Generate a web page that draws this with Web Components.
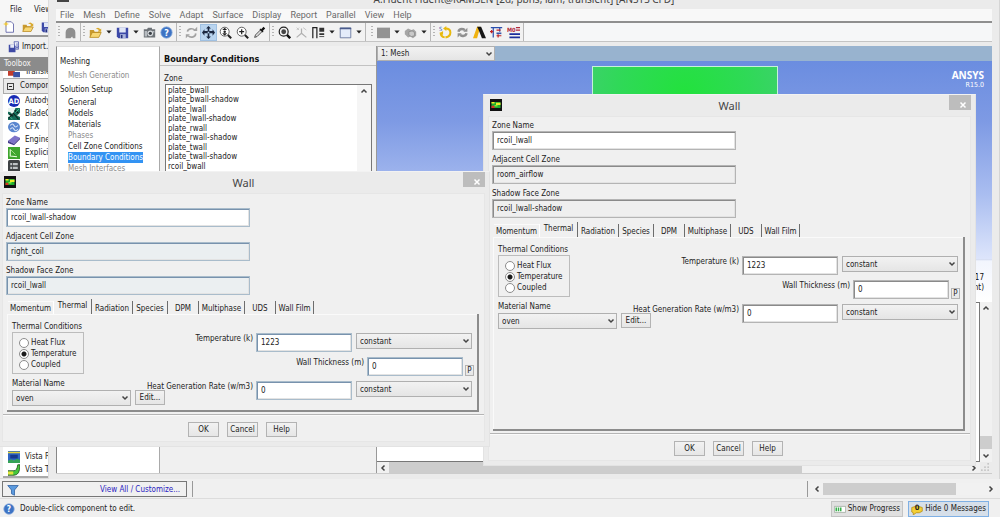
<!DOCTYPE html>
<html lang="en">
<head>
<meta charset="utf-8">
<title>Fluent boundary conditions</title>
<style>
html, body { margin: 0; height: 100%; overflow: hidden; background: #efefef; }
body { font: 8px/10px "DejaVu Sans Condensed", "DejaVu Sans", sans-serif; color: #222; }
</style>
</head>
<body>
<app-desktop></app-desktop>
<script>
const base = `<style>
*{box-sizing:border-box}
button,input,select{font:inherit;color:inherit;margin:0;border-radius:0;outline:0}
button{padding:0;cursor:pointer}
svg{display:block;flex:none}
ul{list-style:none;margin:0;padding:0}
</style>`;
const define = (name, html, setup) => {
  const t = document.createElement('template');
  t.innerHTML = base + html;
  customElements.define(name, class extends HTMLElement {
    constructor() {
      super();
      this.attachShadow({ mode: 'open' }).append(t.content.cloneNode(true));
    }
    connectedCallback() { if (setup) setup(this, this.shadowRoot); }
  });
};

/* ---------- icons, all on a 16 unit grid ---------- */
const arrowsPath = 'M8 0l3 3H9v3h4V4l3 4-3 4V9H9v4h2l-3 3-3-3h2V9H3v3L0 8l3-4v2h4V3H5z';
const icons = {
  blob: '<path d="M2 15V8a6 6 0 0 1 12 0v7h-3l-1-2-2 2z" fill="#8f8f8f"/>',
  open: '<path d="M1 14V5h5l1 2h6v2H5z" fill="#c99a2e"/><path d="M1 14l3-6h11l-3 6z" fill="#f7d774" stroke="#b98a20"/><path d="M8 4q3-4 6 0l1-1v4h-4l1-2q-2-2-4-1z" fill="#d9a92c"/>',
  save: '<path d="M1 2h14v13H3l-2-2z" fill="#3c49a8"/><path d="M4 2h8v6H4z" fill="#dfe5f6"/><path d="M5 10h7v5H5z" fill="#a9b3dc"/><path d="M6 11h2v4H6z" fill="#25307c"/>',
  camera: '<path d="M1 4h4l1-2h5v2h4v10H1z" fill="#6d7277"/><path d="M2 6h3v7H2zM12 6h2v2h-2z" fill="#b6bbc0"/><circle cx="9" cy="9" r="3.500" fill="#d6dadd"/><circle cx="9" cy="9" r="2" fill="#3b4147"/>',
  help: '<circle cx="8" cy="8" r="7" fill="#3d73c4" stroke="#8fb0df"/><text x="8" y="12" text-anchor="middle" font-size="11" font-weight="bold" fill="#fff">?</text>',
  refresh: '<g fill="none" stroke="#a3a3a3" stroke-width="2"><path d="M3 7a5 4 0 0 1 9-2"/><path d="M13 9a5 4 0 0 1-9 3"/></g><path d="M10 6h5V1zM6 10H1v5z" fill="#a3a3a3"/>',
  move: `<path d="${arrowsPath}" fill="#1b2740"/><path d="M7 7h2v2H7z" fill="#b9d4ef"/>`,
  zoomfit: '<circle cx="7" cy="7" r="5.500" fill="#fff" stroke="#444"/><path d="M7 2l3 3H4zM7 12l3-3H4z" fill="#222"/><circle cx="7" cy="7" r="1.500" fill="#222"/><path d="M11 11l4 4" stroke="#222" stroke-width="2.500"/>',
  zoomin: '<circle cx="7" cy="7" r="5.500" fill="#fff" stroke="#444"/><path d="M7 4v6M4 7h6" stroke="#222" stroke-width="1.500"/><path d="M11 11l4 4" stroke="#222" stroke-width="2.500"/>',
  pipette: '<path d="M2 14l1-3 6-6 2 2-6 6z" fill="#ddd" stroke="#333"/><path d="M8 4l4 4 1-1-1-1 3-3-2-2-3 3-1-1z" fill="#111"/>',
  lens: '<circle cx="7" cy="7" r="5.500" fill="#f4f4f4" stroke="#222" stroke-width="1.500"/><circle cx="7" cy="7" r="3" fill="#444"/><path d="M11 11l4 4" stroke="#111" stroke-width="3"/>',
  axes: '<path d="M8 9V3M8 9l-6 5M8 9l6 5" stroke="#b0b0b0" stroke-width="1.500" fill="none"/><path d="M2 2l3 3M5 2L2 5M10 2l4 3" stroke="#bbb"/>',
  layout: '<path d="M1 15V2h5v13M1 2v13" stroke="#222" stroke-width="1.500" fill="none"/><path d="M9 2h6v5H9zM9 9h6v2H9z" fill="#333"/><path d="M9 13h6" stroke="#333"/>',
  square: '<path d="M1.500 2.500h13v12h-13z" fill="#e4ecfa" stroke="#5b6c96"/><path d="M1 2h14v2H1z" fill="#4a5b8c"/>',
  fill: '<path d="M0 2h16v13H0z" fill="#939393"/>',
  cubes: '<path d="M1 6l4-3 4 2 3-1 3 3v5l-4 3-3-2-3 1-4-4z" fill="#a5a5a5"/><path d="M6 7l4-1 3 2v4l-4 1-3-2z" fill="#c9c9c9" stroke="#8b8b8b"/>',
  sync: '<g fill="none" stroke="#e8b90e" stroke-width="2.500"><path d="M8 3q6 0 6 5t-6 6"/><path d="M2 8q0 5 5 6"/></g><path d="M9 0v6L5 3zM1 9l4-3v5z" fill="#e8b90e"/><text x="0" y="6" font-size="7" fill="#3c62b5">S</text>',
  cycle: '<g fill="none" stroke="#909090" stroke-width="3"><path d="M3 7q1-4 6-3l2 1"/><path d="M13 9q-1 4-6 3l-2-1"/></g><path d="M9 7h5V2zM7 9H2v5z" fill="#909090"/>',
  ansys: '<path d="M0 15L5 1h4L5 15z" fill="#f0b310"/><path d="M5 1h5l6 14h-5L7 5z" fill="#161616"/>',
  params: '<path d="M1 2h14M4 2v12M12 2v5" stroke="#2c4fae" stroke-width="1.500"/><path d="M0 7h4M2 5v4M8 5h5M8 12h6M10 10v4" stroke="#c22525" stroke-width="1.500"/><path d="M8 8h6v2H8z" fill="#3555a8"/>',
  modes: '<text x="0" y="7" font-size="7" font-weight="bold" fill="#b12a3a">M0</text><path d="M11 2h5M11 5h5" stroke="#b12a3a" stroke-width="1.500"/><path d="M3 10h13M3 14h13" stroke="#1d2e9c" stroke-width="2"/>',
  fresh: '<path d="M4 1h7l3 3v11H4z" fill="#fff" stroke="#4a4e9b"/><path d="M4 0l1 3 3 1-3 1-1 3-1-3-3-1 3-1z" fill="#f3c933"/>',
  import: '<path d="M1 5h9v10H1z" fill="#3f4aa5"/><path d="M3 5h5v4H3z" fill="#e6e9f7"/><path d="M8 1h6v10h-4z" fill="#f3f4fb" stroke="#4a54a8"/><path d="M12 3v6M10 7l2 3 2-3" stroke="#3f4aa5" fill="none"/>',
  autodyn: '<circle cx="8" cy="8" r="8" fill="#182bb5"/><text x="8" y="12" text-anchor="middle" font-size="10" font-weight="bold" fill="#fff">AD</text>',
  blade: '<path d="M0 0h16v16H0z" fill="#e8f4ef"/><path d="M0 5q4 0 6 4l4-9h6v6l-4 4 4 2v4H0v-4l4-1-4-3z" fill="#156b58"/><path d="M1 14l6-7 7 8M9 3l5 4M2 8l5 3" stroke="#0b201c" stroke-width="1.500" fill="none"/><path d="M10 6l5-5M3 12l3 3" stroke="#4fd0a0"/>',
  cfx: '<ellipse cx="8" cy="8" rx="8" ry="7" fill="#5a86cf"/><path d="M3 6q3-4 5 0t5 0M3 11q3-4 5 0t5 0" stroke="#dbe7fa" stroke-width="1.500" fill="none"/>',
  engine: '<path d="M0 9l9-7 7 3-8 8z" fill="#7d73c8"/><path d="M0 9v3l8 3 8-8V5l-8 8z" fill="#453b8e"/>',
  explicit: '<path d="M0 0h16v16H0z" fill="#3ea52e"/><path d="M3 3v9l9 1" stroke="#eaffdf" stroke-width="1.500" fill="none"/><path d="M4 4l6 6" stroke="#bdf09f"/>',
  external: '<rect width="16" height="16" rx="2" fill="#3f4345"/><path d="M3 4h10v3H3zM3 9h10v3H3z" fill="#bfc4c6"/><path d="M6 3v10" stroke="#3f4345"/>',
  transient: '<path d="M0 5h9v8H0z" fill="#c23c2c"/><path d="M7 8h9v7H7z" fill="#3b54a6"/>',
  vistar: '<path d="M0 0h16v16H0z" fill="#2f64c2"/><path d="M0 2h16M2 14h14" stroke="#e2d23a" stroke-width="2"/><path d="M0 13l4-2 4 2 4-3 4 2v4H0z" fill="#35a356"/><path d="M3 5h10v5H3z" fill="#16388e"/>',
  vistat: '<path d="M0 9h8q4 0 5-8h3q0 14-8 14H0z" fill="#45c63a" stroke="#163f12"/><path d="M0 10h7v4H0z" fill="#e3e23c"/>',
  filter: '<path d="M1 2h14l-5 6v7l-4-2V8z" fill="#5b9ade" stroke="#2b5c9f"/>',
  wall: '<path d="M0 0h16v16H0z" fill="#111"/><path d="M2 4h12v8H2z" fill="#1fae2f"/><path d="M2 4h4v2H2zM8 5h6v3H8z" fill="#f0ea2a"/><path d="M2 9h4v3H2z" fill="#d83422"/><path d="M6 8h4v2H6z" fill="#7ee83a"/>',
  progress: '<path d="M.500 4.500h15v8h-15z" fill="#fff" stroke="#9aa79a"/><path d="M2 6h2v5H2zM5 6h2v5H5zM8 6h2v5H8z" fill="#37b04a"/>',
  message: '<path d="M1 6q7-4 14 0v5q-4 3-8 2l-4 3v-3l-2-1z" fill="#f3cf35" stroke="#b28a17"/><text x="8" y="9" text-anchor="middle" font-size="10" font-weight="bold" fill="#222">0</text>',
  down: '<path d="M3 5l5 5 5-5" fill="none" stroke="#444" stroke-width="3"/>',
  up: '<path d="M3 11l5-5 5 5" fill="none" stroke="#444" stroke-width="3"/>',
  left: '<path d="M11 3L6 8l5 5" fill="none" stroke="#444" stroke-width="3"/>',
  right: '<path d="M5 3l5 5-5 5" fill="none" stroke="#444" stroke-width="3"/>',
  close: '<path d="M3 3l10 10M13 3L3 13" stroke="#fff" stroke-width="3"/>',
  drop: '<path d="M1 4h14l-7 8z" fill="#222"/>',
  grip: '<path d="M12 12h2v2h-2zM12 7h2v2h-2zM12 2h2v2h-2zM7 12h2v2H7zM7 7h2v2H7zM2 12h2v2H2z" fill="#aaa"/>'
};
define('ui-icon', `<style>:host{display:block;flex:none;width:var(--s,12px);height:var(--s,12px)}svg{width:100%;height:100%}</style><svg viewBox="0 0 16 16" aria-hidden="true"></svg>`,
  (el, r) => {
    r.querySelector('svg').innerHTML = icons[el.getAttribute('name')];
    if (el.hasAttribute('size')) el.style.setProperty('--s', el.getAttribute('size') + 'px');
  });

/* ---------- form controls ---------- */
define('push-button', `<style>
:host{display:block;min-width:31px;height:15px}
button{width:100%;height:100%;border:1px solid #b3b3b3;background:linear-gradient(#f2f2f2,#e6e6e6);line-height:10px}
</style><button type="button"><slot></slot></button>`);

define('combo-box', `<style>
:host{display:grid;height:16px}
select,ui-icon{grid-area:1/1}
select{appearance:none;width:100%;height:100%;padding:1px 0 0 3px;border:1px solid #b0b0b0;background:linear-gradient(#f2f2f2,#e5e5e5)}
ui-icon{place-self:center end;margin-right:2px;pointer-events:none}
</style><select><option></option></select><ui-icon name="down" size="8"></ui-icon>`,
  (el, r) => {
    r.querySelector('option').textContent = el.getAttribute('value');
    r.querySelector('select').setAttribute('aria-label', el.getAttribute('label'));
  });

define('text-field', `<style>
:host{display:block}
label{display:block;height:10px}
input{display:block;width:100%;height:19px;padding:0 0 1px 4px;border:1px solid var(--edge,#b4b4b4);background:#fff;box-shadow:inset 1px 1px var(--inset,#8a8a8a),inset -1px -1px #e3e3e3}
input[readonly]{background:var(--locked,#efefef)}
:host([inline]){display:flex;gap:3px}
:host([inline]) label{padding-top:1px;white-space:nowrap}
:host([inline]) input{width:96px}
</style><label for="f"></label><input id="f" type="text">`,
  (el, r) => {
    r.querySelector('label').textContent = el.getAttribute('label');
    const i = r.querySelector('input');
    i.value = el.getAttribute('value');
    i.readOnly = el.hasAttribute('locked');
  });

define('radio-group', `<style>
:host{display:block}
fieldset{margin:0;padding:0;border:0;min-width:0}
legend{padding:0;height:10px}
div{width:72px;height:42px;padding:4px 0 0 6px;border:1px solid #bcbcbc}
label{display:flex;align-items:center;gap:2px;height:11px}
input{appearance:none;flex:none;width:10px;height:10px;border:1px solid #8c8c8c;border-radius:50%;background:#fff}
input:checked{background:radial-gradient(circle,#1a1a1a 0 2px,#fff 3px)}
</style><fieldset><legend>Thermal Conditions</legend><div>
<label><input type="radio" name="t">Heat Flux</label>
<label><input type="radio" name="t" checked>Temperature</label>
<label><input type="radio" name="t">Coupled</label></div></fieldset>`);

define('scroll-bar', `<style>
:host{display:flex;align-items:center;background:#f1f1f1;padding:0 2px}
i{background:#cdcdcd;align-self:stretch}
:host([vertical]){flex-direction:column;padding:2px 0}
span{flex:1}
</style>`,
  (el, r) => {
    const v = el.hasAttribute('vertical'), n = el.getAttribute('thumb') || '0px';
    const thumb = `<i style="flex:0 0 ${n}"></i>`, space = '<span></span>';
    r.append(document.createRange().createContextualFragment(
      `<ui-icon name="${v ? 'up' : 'left'}" size="8"></ui-icon>${v ? space + thumb : thumb + space}<ui-icon name="${v ? 'down' : 'right'}" size="8"></ui-icon>`));
    if (v) r.querySelector('i').style.marginBottom = '3px';
    else r.querySelector('i').style.marginLeft = '2px';
  });

/* ---------- wall dialog ---------- */
define('wall-dialog', `<style>
:host{display:block;background:#ebebeb;border:1px solid #e3e3e3;border-top-color:#f2f2f2;padding-bottom:4px}
header{display:grid;grid-template-columns:1fr auto 1fr;height:21px;font:11px/21px "Noto Sans",sans-serif;color:#444}
header ui-icon{margin:4px 0 0 6px}
header button{justify-self:end;width:22px;height:15px;margin-right:4px;border:0;background:#bdbdbd;display:grid;place-items:center}
main{margin:0 4px;border:1px solid #e6e6e6;background:#f0f0f0}
.names{display:grid;gap:5px;padding:4px 0 0 3px;width:247px}
.tabs{display:grid;grid-template-columns:46px 38px 41px 35px 31px 46px 31px 38px;height:15px;margin:4px 0 0 5px}
.tabs button{border:0;border-right:1px solid #6d6d6d;background:none;height:13px;padding-top:3px;align-self:end;white-space:nowrap;line-height:10px}
.tabs button:first-child{border-right-color:#fff;box-shadow:inset 0 1px #fafafa}
.tabs [aria-selected=true]{align-self:start;height:15px;padding:1px 0 3px}
.panel{display:grid;grid-template-columns:120px 1fr;min-height:var(--panel,98px);margin:0 5px 0 4px;border:solid #8c8c8c;border-width:0 2px 2px 0;box-shadow:inset 1px 1px #fafafa;padding-left:5px}
.left{display:grid;gap:5px;padding-top:8px;align-content:start}
.material{display:grid;grid-template-columns:119px 30px;column-gap:4px}
.material span{grid-column:1/3;height:11px}
.material push-button{min-width:0}
.right{display:grid;gap:5px;padding:19px 3px 0 0;justify-items:end;align-content:start;justify-self:end}
.row{display:flex;gap:4px;margin-right:2px}
.row combo-box{width:116px}
.thick{gap:2px;margin:0;align-items:end}
.thick push-button{min-width:0;width:9px;height:11px}
footer{display:flex;justify-content:center;gap:8px;margin-top:2px;padding:7px 2px 4px 0;border-top:1px solid #b5b5b5;box-shadow:inset 0 1px #fafafa}
</style>
<header><ui-icon name="wall"></ui-icon><span>Wall</span><button type="button" aria-label="Close"><ui-icon name="close" size="8"></ui-icon></button></header>
<main>
<div class="names"></div>
<div class="tabs" role="tablist"></div>
<div class="panel">
<div class="left"><radio-group></radio-group>
<div class="material"><span>Material Name</span><combo-box label="Material Name" value="oven"></combo-box><push-button>Edit...</push-button></div></div>
<div class="right">
<div class="row"><text-field inline label="Temperature (k)" value="1223"></text-field><combo-box label="Temperature profile" value="constant"></combo-box></div>
<div class="row thick"><text-field inline label="Wall Thickness (m)" value="0"></text-field><push-button>P</push-button></div>
<div class="row"><text-field inline label="Heat Generation Rate (w/m3)" value="0"></text-field><combo-box label="Heat generation profile" value="constant"></combo-box></div>
</div></div>
<footer><push-button>OK</push-button><push-button>Cancel</push-button><push-button>Help</push-button></footer>
</main>`,
  (el, r) => {
    r.querySelector('.names').innerHTML = [['Zone Name', 'zone'], ['Adjacent Cell Zone', 'adjacent'], ['Shadow Face Zone', 'shadow']]
      .map(([l, k], i) => `<text-field label="${l}" value="${el.getAttribute(k)}" ${i ? 'locked' : ''}></text-field>`).join('');
    r.querySelector('.tabs').innerHTML = ['Momentum', 'Thermal', 'Radiation', 'Species', 'DPM', 'Multiphase', 'UDS', 'Wall Film']
      .map(t => `<button type="button" role="tab" aria-selected="${t === 'Thermal'}">${t}</button>`).join('');
  });

/* ---------- Fluent window ---------- */
define('tool-bar', `<style>
:host{display:flex;height:19px;background:#f6f7f8;border-bottom:1px solid #c4c4c4}
.group{display:flex;align-items:center;padding-right:1px;border-right:1px solid #b8b8b8;background:#f2f2f2}
.group::before{content:"";width:2px;height:12px;margin:0 2px;background:repeating-linear-gradient(#b5b5b5 0 1px,transparent 1px 3px)}
button{display:grid;place-items:center;width:17px;height:17px;border:0;background:none}
button.drop{width:10px}
button.on{background:#b9d4ef;border:1px solid #9fc0e2}
.group.wide{padding:0 1px 0 3px}
</style>`,
  (el, r) => {
    [['blob'], ['open', 'drop', 'save', 'drop', 'camera', 'help'], ['refresh', 'move', 'zoomfit', 'zoomin', 'pipette'],
     ['lens', 'axes', 'layout', 'drop', 'square', 'drop'], ['fill', 'drop', 'cubes', 'drop'],
     ['sync', 'cycle', 'ansys', 'params', 'modes']].forEach((g, n) => {
      const d = document.createElement('div');
      d.className = 'group' + (n === 4 ? ' wide' : '');
      d.innerHTML = g.map(i => `<button type="button" class="${i === 'drop' ? 'drop' : i === 'move' ? 'on' : ''}" aria-label="${i}"><ui-icon name="${i}" size="${i === 'drop' ? 6 : 13}"></ui-icon></button>`).join('');
      r.append(d);
    });
  });

define('nav-tree', `<style>
:host{display:block;background:#fff;border-left:1px solid #888;border-top:1px solid #ddd;border-right:1px solid #aaa;padding:8px 0 0 3px}
.h{height:14px;line-height:14px}
li{height:11px;line-height:11px;margin-left:8px}
.dim{color:#8b8b8b}
.gen{height:14px;line-height:14px}
.on span{background:#3393f3;color:#fff;display:inline-block}
</style>
<div class="h">Meshing</div><ul><li class="gen dim">Mesh Generation</li></ul>
<div class="h">Solution Setup</div>
<ul><li>General</li><li>Models</li><li>Materials</li><li class="dim">Phases</li><li>Cell Zone Conditions</li><li class="on"><span>Boundary Conditions</span></li><li class="dim">Mesh Interfaces</li></ul>`);

define('task-page', `<style>
:host{display:flex;flex-direction:column;background:#f0f0f0}
h2{margin:0;padding:7px 0 0 4px;height:20px;font:bold 9px/12px "DejaVu Sans Condensed",sans-serif;border-bottom:1px solid #c2c2c2;color:#111}
.zone{margin:8px 0 0 4px;height:10px}
.list{height:240px;display:grid;grid-template-columns:1fr 14px;margin:0 4px 0 5px;border:1px solid #777;background:#fff}
ul{display:grid;height:86px;padding:1px 0 0 2px}
li{line-height:9px}
scroll-bar{background:#f5f5f5}
</style><h2>Boundary Conditions</h2><div class="zone">Zone</div>
<div class="list"><ul><li>plate_bwall</li><li>plate_bwall-shadow</li><li>plate_lwall</li><li>plate_lwall-shadow</li><li>plate_rwall</li><li>plate_rwall-shadow</li><li>plate_twall</li><li>plate_twall-shadow</li><li>rcoil_bwall</li></ul><scroll-bar vertical></scroll-bar></div>`);

define('graphics-view', `<style>
:host{display:grid;grid-template-rows:15px 241px 1fr 11px;border-left:1px solid #999}
.bar{background:#98b3cf}
.bar combo-box{width:118px;height:15px}
.scene{position:relative;background:linear-gradient(#6b8de0,#7e9ae4 25%,#a9bdf0 55%,#dde5fb 82%,#c9d3ee 82%,#f2f5fd 83%,#fff)}
.mesh{width:186px;height:120px;position:absolute;left:35%;top:5px;border:1px solid #c6f2da;background:radial-gradient(ellipse at 50% 28px,#22e23c,#2fd957 50%,#46cc78)}
.logo{position:absolute;right:8px;top:9px;text-align:right;color:#fff;font:bold 10px/11px "Noto Sans",sans-serif}
.logo small{display:block;font:7px/8px "DejaVu Sans Condensed",sans-serif}
.stamp{position:absolute;right:8px;top:212px;text-align:right;color:#111}
.console{display:grid;grid-template-columns:1fr 12px}
.console div{background:#fff;border:1px solid #777;border-left:0}
.foot{display:grid;grid-template-columns:1fr 12px}
</style>
<div class="bar"><combo-box label="View" value="1: Mesh"></combo-box></div>
<div class="scene"><div class="mesh"></div><div class="logo">ANSYS<small>R15.0</small></div><div class="stamp">17<br>nt)</div></div>
<div class="console"><div></div><scroll-bar vertical thumb="13px"></scroll-bar></div>
<div class="foot"><scroll-bar thumb="69%"></scroll-bar><ui-icon name="grip" size="10"></ui-icon></div>`);

define('fluent-window', `<style>
:host{display:grid;grid-template-rows:9px 14px 20px 1fr;background:#ebebeb;border-left:1px solid #ddd;border-right:1px solid #d5d5d5;padding:0 7px 5px 7px}
header{display:flex;align-items:end;justify-content:center;position:relative;font:10px/14px "Noto Sans",sans-serif;color:#444;white-space:nowrap}
header span{margin-bottom:3px}
header i{position:absolute;left:1px;top:0;width:12px;height:2px;background:#444}
nav{display:flex;gap:9px;padding-left:4px;background:#f8f8f8;font:9px/12px Roboto,sans-serif;color:#6a6a6a;border-bottom:2px solid #8f8f8f}
.work{display:grid;grid-template-columns:104px 216px 1fr;margin-top:3px;border-bottom:1px solid #ccc}
</style>
<header><i></i><span>A:Fluent Fluent@RAMSEN [2d, pbns, lam, transient] [ANSYS CFD]</span></header>
<nav><span>File</span><span>Mesh</span><span>Define</span><span>Solve</span><span>Adapt</span><span>Surface</span><span>Display</span><span>Report</span><span>Parallel</span><span>View</span><span>Help</span></nav>
<tool-bar></tool-bar>
<div class="work"><nav-tree></nav-tree><task-page></task-page><graphics-view></graphics-view></div>`);

/* ---------- Workbench window ---------- */
define('workbench-window', `<style>
:host{display:grid;grid-template-rows:20px 17px 20px 14px 1fr 21px 18px;background:#f0f0f0}
nav{display:flex;gap:12px;align-items:center;padding-left:10px;background:#f7f7f7}
.tools{display:flex;gap:7px;padding:1px 0 0 3px;background:#f3f3f3;border-bottom:2px solid #999}
.import{display:flex;align-items:center;padding-left:8px;gap:2px}
h3{margin:0;padding-left:4px;font:inherit;line-height:14px;background:#8b8b8b;color:#f4f4f4}
.box{display:flex;flex-direction:column;background:#fff;border-bottom:2px solid #aaa;margin-left:3px;overflow:hidden}
li{display:flex;align-items:center;gap:5px;height:13px;padding-left:5px;white-space:nowrap}
.cut{margin-top:-6px;height:13px}
.head{display:flex;align-items:center;gap:6px;height:16px;padding-left:3px;background:#e9e9e9;border:1px solid #aaa;white-space:nowrap}
.head b{width:7px;height:7px;border:1px solid #444;display:grid;place-items:center}
.head b::after{content:"";width:3px;height:1px;background:#222}
.end{margin-top:auto}
.foot{display:grid;grid-template-columns:185px 1fr 190px;gap:5px;padding:2px 3px 2px 2px;border-top:1px solid #ddd;border-bottom:1px solid #dcdcdc}
.all{display:flex;align-items:center;justify-content:space-between;padding:2px 6px 0 4px;border:1px solid #777}
.all a{color:#2a22c0;text-decoration:none}
.mid{border-left:1px solid #999}
.hs{border-left:1px solid #999;padding:2px 0 2px 3px;display:grid}
.status{display:flex;align-items:center;gap:5px;padding:1px 11px 0 3px}
.status span{flex:1}
.status button{display:flex;align-items:center;gap:2px;height:16px;padding:0 2px;border:1px solid #c4c4c4;background:#e0e0e0;white-space:nowrap}
.status button:last-child{border-color:#7fb0e4;background:#d6dfe9}
</style>
<nav><span>File</span><span>View</span></nav>
<div class="tools"><ui-icon name="fresh"></ui-icon><ui-icon name="open"></ui-icon><ui-icon name="save"></ui-icon></div>
<div class="import"><ui-icon name="import"></ui-icon><span>Import...</span></div>
<h3>Toolbox</h3>
<div class="box"><ul><li class="cut"><ui-icon name="transient"></ui-icon>Transient</li></ul>
<div class="head"><b></b>Component</div>
<ul><li><ui-icon name="autodyn"></ui-icon>Autodyn</li><li><ui-icon name="blade"></ui-icon>BladeGen</li><li><ui-icon name="cfx"></ui-icon>CFX</li><li><ui-icon name="engine"></ui-icon>Engineering</li><li><ui-icon name="explicit"></ui-icon>Explicit</li><li><ui-icon name="external"></ui-icon>External</li></ul>
<ul class="end"><li><ui-icon name="vistar"></ui-icon>Vista RTD</li><li><ui-icon name="vistat"></ui-icon>Vista TF</li></ul></div>
<div class="foot"><div class="all"><ui-icon name="filter"></ui-icon><a href="#">View All / Customize...</a></div><div class="mid"></div><div class="hs"><scroll-bar thumb="133px"></scroll-bar></div></div>
<div class="status"><ui-icon name="help"></ui-icon><span>Double-click component to edit.</span><button type="button"><ui-icon name="progress"></ui-icon>Show Progress</button><button type="button"><ui-icon name="message"></ui-icon>Hide 0 Messages</button></div>`);

/* windows stacked on the desktop */
define('app-desktop', `<style>
:host{display:block;position:relative;height:100vh;overflow:hidden}
workbench-window{height:100%}
fluent-window{position:absolute;left:48px;right:0;top:0;bottom:38px}
wall-dialog{position:absolute;width:49.3%;min-width:480px}
.a{left:48.3%;top:94px;--panel:194px}
.b{left:-3px;top:171px;--edge:#a9bccb;--inset:#7892ad;--locked:#ebeff1}
</style>
<workbench-window></workbench-window><fluent-window></fluent-window>
<wall-dialog class="a" zone="rcoil_lwall" adjacent="room_airflow" shadow="rcoil_lwall-shadow"></wall-dialog>
<wall-dialog class="b" zone="rcoil_lwall-shadow" adjacent="right_coil" shadow="rcoil_lwall"></wall-dialog>`);
</script>
</body>
</html>
